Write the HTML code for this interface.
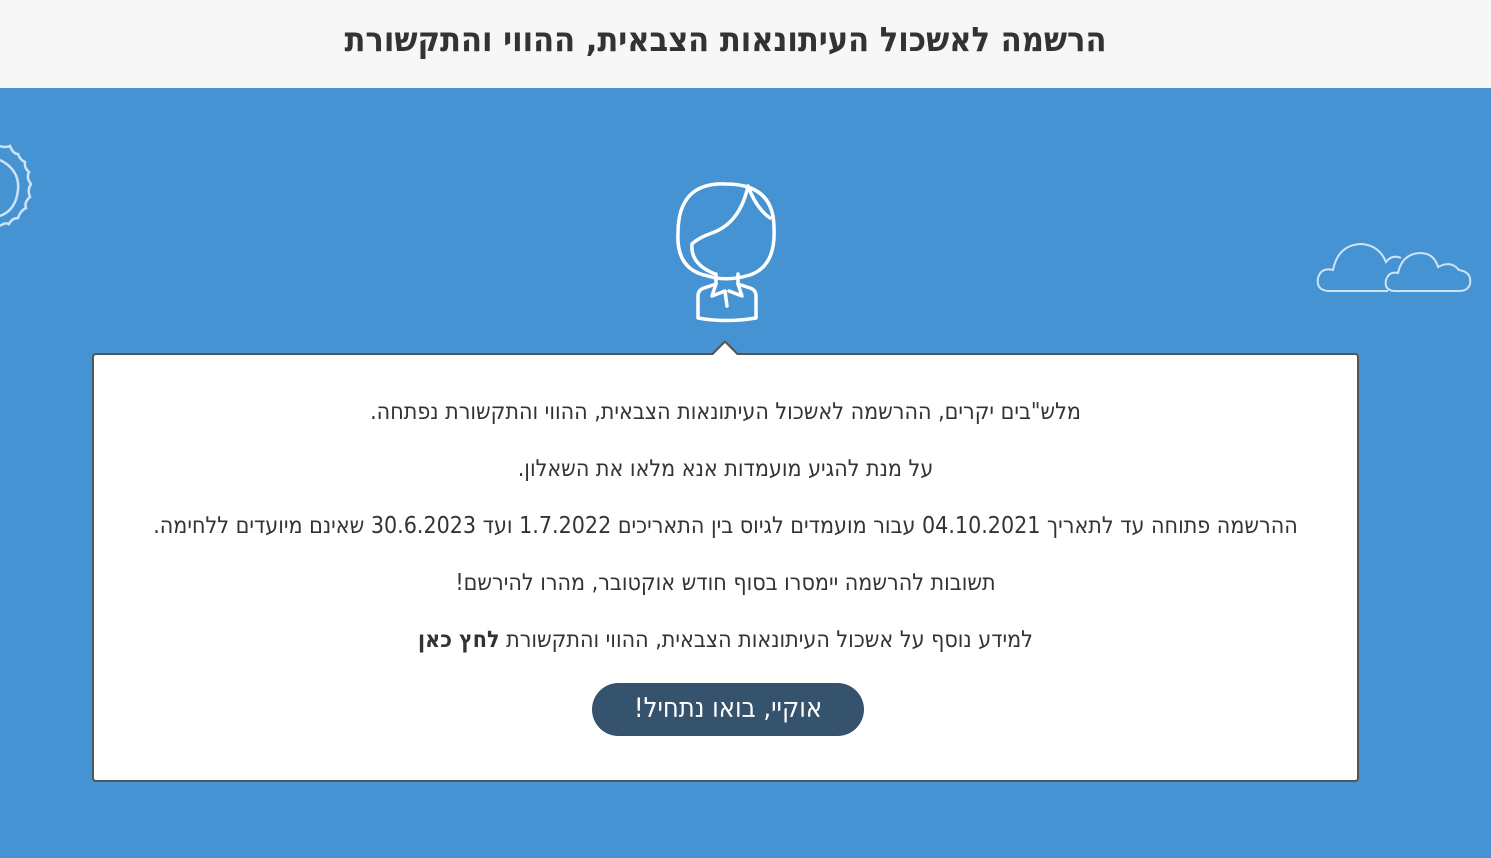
<!DOCTYPE html>
<html><head><meta charset="utf-8"><style>
html,body{margin:0;padding:0}
body{width:1491px;height:858px;overflow:hidden;background:#4593d3;font-family:"Liberation Sans Narrow","DejaVu Sans Condensed","Liberation Sans",sans-serif;position:relative}
.hdr{position:absolute;left:0;top:0;width:1491px;height:88px;background:#f7f7f7;text-align:center;line-height:80px;font-size:34px;font-weight:bold;color:#333;direction:rtl}
.hdr span{position:relative;left:-20px}
.card{position:absolute;left:92px;top:353px;width:1263px;height:425px;background:#fff;border:2px solid #555;border-radius:4px}
.arrow{position:absolute;left:711px;top:340px;width:0;height:0;border-left:14px solid transparent;border-right:14px solid transparent;border-bottom:14px solid #555}
.arrow2{position:absolute;left:713px;top:343px;width:0;height:0;border-left:12px solid transparent;border-right:12px solid transparent;border-bottom:12px solid #fff}
.line{position:absolute;left:92px;width:1267px;text-align:center;direction:rtl;font-size:23px;color:#333}
.btn{position:absolute;left:592px;top:683px;width:272px;height:53px;border-radius:27px;background:#35536d;color:#fff;text-align:center;line-height:52px;font-size:27px;direction:rtl}
</style></head><body>
<div class="hdr"><span>הרשמה לאשכול העיתונאות הצבאית, ההווי והתקשורת</span></div>
<svg style="position:absolute;left:0;top:140px" width="40" height="95" viewBox="0 0 40 95" fill="none" stroke="#cfe3f5" stroke-width="2.5">
<path d="M0 6 Q6 8 10 6 Q13 14 18 14 Q20 20 25 22 Q24 28 29 32 Q26 38 31 44 Q27 50 30 57 Q24 62 26 68 Q20 71 18 78 Q12 78 9 84 Q5 82 0 86"/>
<path d="M0 20 Q20 30 18 50 Q16 70 0 76"/>
</svg>
<svg style="position:absolute;left:1316px;top:240px" width="158" height="55" viewBox="0 0 158 55" fill="none" stroke="#cfe3f5" stroke-width="2">
<path d="M12 51 Q0 50 2 38 Q5 27 17 30 Q22 5 45 4 Q63 5 70 22 Q76 14 85 18"/>
<path d="M12 51 L72 51"/>
<path d="M78 51 Q68 50 70 40 Q73 31 82 33 Q86 14 104 13 Q118 13 122 27 Q135 20 143 30 Q156 32 154 44 Q152 51 143 51 Z"/>
</svg>
<svg style="position:absolute;left:670px;top:178px" width="115" height="145" viewBox="0 0 115 145" fill="none" stroke="#fff" stroke-width="3.5" stroke-linejoin="round" stroke-linecap="round">
<path d="M56 6 Q8 4 8 55 Q6 92 38 98 Q56 104 80 97 Q106 88 104 50 Q104 6 56 6 Z"/>
<path d="M78 8 Q70 45 42 55 Q28 60 22 66 Q20 86 45 96"/>
<path d="M78 8 Q86 30 100 40"/>
<path d="M46 96 L46 106 L34 110 Q28 112 28 118 L28 140 Q56 145 86 140 L86 118 Q86 112 80 110 L68 106 L68 96"/>
<path d="M46 106 L42 118 L55 113 L57 128 M68 106 L72 118 L59 113"/>
</svg>
<div class="card"></div>
<div class="arrow"></div><div class="arrow2"></div>
<div class="line" style="top:399px">מלש"בים יקרים, ההרשמה לאשכול העיתונאות הצבאית, ההווי והתקשורת נפתחה.</div>
<div class="line" style="top:456px">על מנת להגיע מועמדות אנא מלאו את השאלון.</div>
<div class="line" style="top:513px">ההרשמה פתוחה עד לתאריך 04.10.2021 עבור מועמדים לגיוס בין התאריכים 1.7.2022 ועד 30.6.2023 שאינם מיועדים ללחימה.</div>
<div class="line" style="top:570px">תשובות להרשמה יימסרו בסוף חודש אוקטובר, מהרו להירשם!</div>
<div class="line" style="top:627px">למידע נוסף על אשכול העיתונאות הצבאית, ההווי והתקשורת <b>לחץ כאן</b></div>
<div class="btn">אוקיי, בואו נתחיל!</div>
</body></html>
